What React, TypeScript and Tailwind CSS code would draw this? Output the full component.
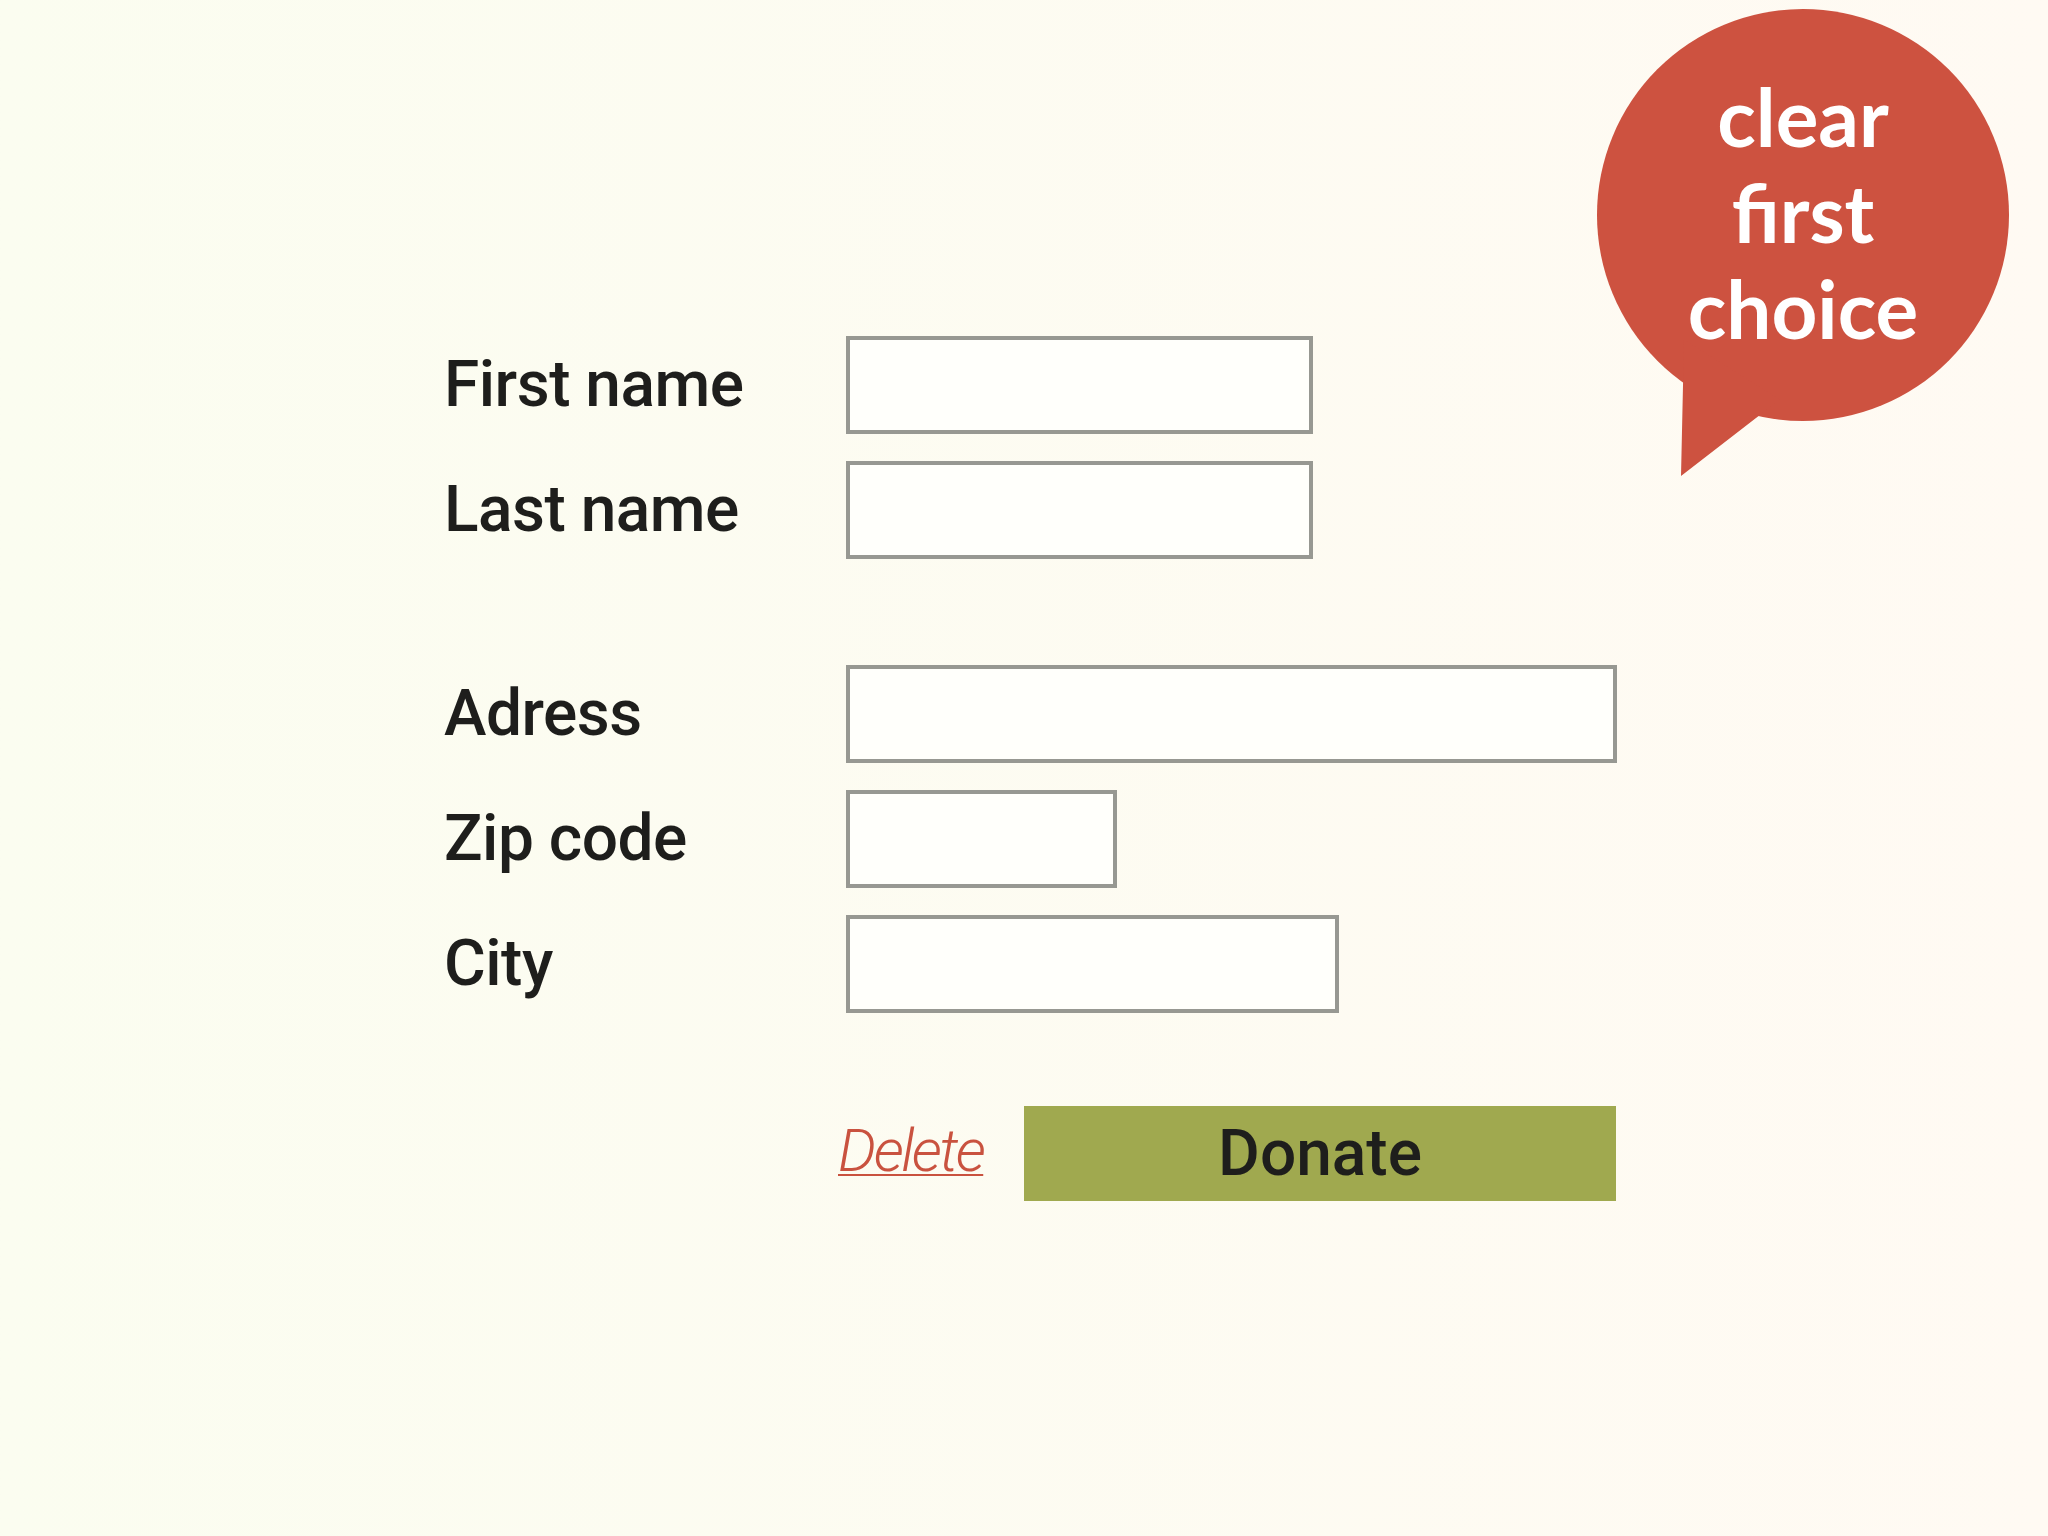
import React from 'react';

type Field = { label: string; width: string };

const nameFields: Field[] = [
    { label: 'First name', width: 'w-[467px]' },
    { label: 'Last name', width: 'w-[467px]' },
];

const addressFields: Field[] = [
    { label: 'Adress', width: 'w-[771px]' },
    { label: 'Zip code', width: 'w-[271px]' },
    { label: 'City', width: 'w-[493px]' },
];

const FieldRow: React.FC<Field> = ({ label, width }) => (
    <label className="grid grid-cols-[402px_auto] items-center">
        <span className="font-['Roboto',sans-serif] font-medium text-[64px] leading-none text-[#1e1e1c] tracking-[-0.5px]">
            {label}
        </span>
        <input type="text" className={`${width} h-[98px] border-4 border-[#979892] bg-[#fffffb] outline-none`} />
    </label>
);

const SpeechBubble = () => (
    <div className="absolute left-[1580px] top-0 w-[468px] h-[490px]">
        <svg viewBox="0 0 468 490" className="absolute inset-0 w-full h-full">
            <circle cx="223" cy="215" r="206" fill="#cd5240" />
            <polygon points="104,340 101,476 176,418 200,400" fill="#cd5240" />
        </svg>
        <div className="absolute left-[17px] top-[68px] w-[412px] text-center font-['Lato',sans-serif] font-bold text-[80px] leading-[96px] text-white">
            <div>clear</div>
            <div>first</div>
            <div>choice</div>
        </div>
    </div>
);

export default function App() {
    return (
        <div className="relative min-h-screen w-full overflow-hidden bg-gradient-to-r from-[#fbfdf0] to-[#fffaf3]">
            <form className="flex flex-col pl-[444px] pt-[336px]" onSubmit={(e) => e.preventDefault()}>
                <div className="flex flex-col gap-[27px]">
                    {nameFields.map((f) => (
                        <FieldRow key={f.label} {...f} />
                    ))}
                </div>
                <div className="mt-[106px] flex flex-col gap-[27px]">
                    {addressFields.map((f) => (
                        <FieldRow key={f.label} {...f} />
                    ))}
                </div>
                <div className="mt-[93px] grid grid-cols-[394px_186px_592px] items-center">
                    <div />
                    <button
                        type="reset"
                        className="justify-self-start -mt-[6px] font-['Roboto',sans-serif] font-light italic text-[60px] leading-none text-[#c9523f] tracking-[-2.5px] underline decoration-2 underline-offset-[3px]"
                    >
                        Delete
                    </button>
                    <button
                        type="submit"
                        className="h-[95px] bg-[#a0a94f] font-['Roboto',sans-serif] font-medium text-[64px] leading-none text-[#1e1e1c]"
                    >
                        Donate
                    </button>
                </div>
            </form>
            <SpeechBubble />
        </div>
    );
}
